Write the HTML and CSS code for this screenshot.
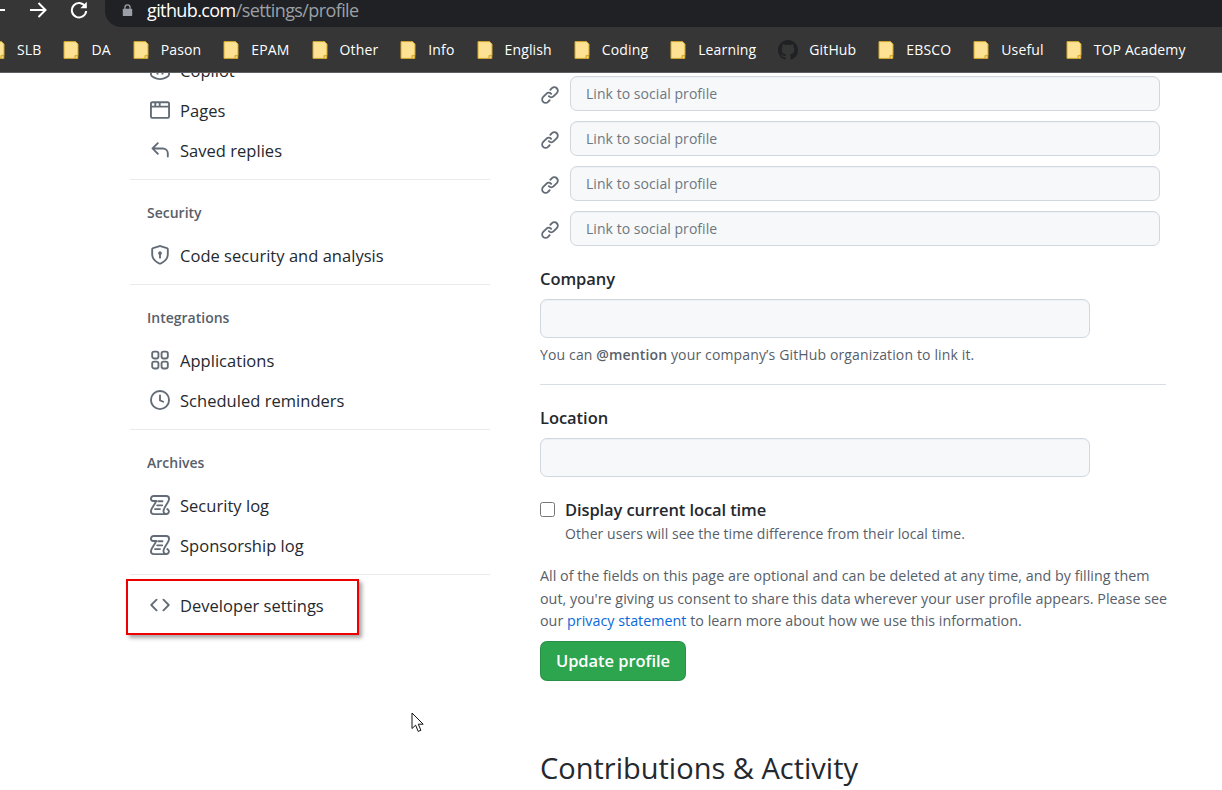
FILE: index.html
```html
<!DOCTYPE html>
<html lang="en">
<head>
<meta charset="utf-8">
<title>Your profile</title>
<link rel="stylesheet" href="styles.css">
</head>
<body>
<svg class="defs" width="0" height="0" aria-hidden="true">
  <symbol id="i-folder" viewBox="0 0 16 18"><path d="M1 .6h11.4L15 3v11.4h-.2v3H1z" fill="#fde293" stroke="#d3a72c" stroke-width="1"/><path d="M12 17.4v-3h3" fill="#f5c84c" stroke="#d3a72c"/></symbol>
  <symbol id="i-browser" viewBox="0 0 16 16"><path d="M0 2.75C0 1.784.784 1 1.75 1h12.5c.966 0 1.75.784 1.75 1.75v10.5A1.75 1.75 0 0 1 14.25 15H1.75A1.75 1.75 0 0 1 0 13.25ZM14.5 6h-13v7.25c0 .138.112.25.25.25h12.5a.25.25 0 0 0 .25-.25Zm-6-3.5v2h6v-1.75a.25.25 0 0 0-.25-.25ZM5 2.5v2h2v-2Zm-3.25 0a.25.25 0 0 0-.25.25V4.5h2v-2Z"/></symbol>
  <symbol id="i-reply" viewBox="0 0 16 16"><path d="M6.78 1.97a.75.75 0 0 1 0 1.06L3.81 6h6.44A4.75 4.75 0 0 1 15 10.75v2.5a.75.75 0 0 1-1.5 0v-2.5a3.25 3.25 0 0 0-3.25-3.25H3.81l2.97 2.97a.749.749 0 0 1-.326 1.275.749.749 0 0 1-.734-.215L1.47 7.28a.75.75 0 0 1 0-1.06l4.25-4.25a.75.75 0 0 1 1.06 0Z"/></symbol>
  <symbol id="i-shield" viewBox="0 0 16 16"><path d="M7.467.133a1.748 1.748 0 0 1 1.066 0l5.25 1.68A1.75 1.75 0 0 1 15 3.48V7c0 1.566-.32 3.182-1.303 4.682-.983 1.498-2.585 2.813-5.032 3.855a1.697 1.697 0 0 1-1.33 0c-2.447-1.042-4.049-2.357-5.032-3.855C1.32 10.182 1 8.566 1 7V3.48a1.75 1.75 0 0 1 1.217-1.667Zm.61 1.429a.25.25 0 0 0-.153 0l-5.25 1.68a.25.25 0 0 0-.174.238V7c0 1.358.275 2.666 1.057 3.86.784 1.194 2.121 2.34 4.366 3.297a.196.196 0 0 0 .154 0c2.245-.956 3.582-2.104 4.366-3.298C13.225 9.666 13.5 8.36 13.5 7V3.48a.251.251 0 0 0-.174-.237l-5.25-1.68ZM9.5 6.5c0 .536-.286 1.032-.75 1.3v2.45a.75.75 0 0 1-1.5 0V7.8A1.5 1.5 0 1 1 9.5 6.5Z"/></symbol>
  <symbol id="i-apps" viewBox="0 0 16 16"><g fill="none" stroke="currentColor" stroke-width="1.5"><rect x="1.75" y="1.25" width="5" height="5.5" rx="1.5"/><rect x="9.25" y="1.25" width="5" height="5.5" rx="1.5"/><rect x="1.75" y="9.25" width="5" height="5.5" rx="1.5"/><rect x="9.25" y="9.25" width="5" height="5.5" rx="1.5"/></g></symbol>
  <symbol id="i-clock" viewBox="0 0 16 16"><g fill="none" stroke="currentColor" stroke-width="1.5" stroke-linecap="round" stroke-linejoin="round"><circle cx="8" cy="8" r="7.25"/><path d="M8 4.25V8.3l2.6 1.1"/></g></symbol>
  <symbol id="i-log" viewBox="0 0 16 16"><g fill="none" stroke="currentColor" stroke-width="1.5" stroke-linecap="round" stroke-linejoin="round"><path d="M13 .75H3A2.25 2.25 0 0 0 .75 3c0 1.3.9 1.75 1.9 1.75h2"/><path d="M13 .75c1.2 0 2.25 1 2.25 2.25 0 2.9-4.5 6.9-4.5 10a2.25 2.25 0 0 0 4.1 1.25 2.2 2.2 0 0 0-1-3"/><path d="M13 15.25H3A2.25 2.25 0 0 1 .75 13c0-2.5 3.4-5.6 4.2-8.25"/><path d="M5.75 8.25h4M4 11.25h4"/><path d="M6.5 5h3.5"/></g></symbol>
  <symbol id="i-code" viewBox="0 0 16 16"><path d="m11.28 3.22 4.25 4.25a.75.75 0 0 1 0 1.06l-4.25 4.25a.749.749 0 0 1-1.275-.326.749.749 0 0 1 .215-.734L13.94 8l-3.72-3.72a.749.749 0 0 1 .326-1.275.749.749 0 0 1 .734.215Zm-6.56 0a.751.751 0 0 1 1.042.018.751.751 0 0 1 .018 1.042L2.06 8l3.72 3.72a.749.749 0 0 1-.326 1.275.749.749 0 0 1-.734-.215L.47 8.53a.75.75 0 0 1 0-1.06Z"/></symbol>
  <symbol id="i-link" viewBox="0 0 16 16"><path d="m7.775 3.275 1.25-1.25a3.5 3.5 0 1 1 4.95 4.95l-2.5 2.5a3.5 3.5 0 0 1-4.95 0 .751.751 0 0 1 .018-1.042.751.751 0 0 1 1.042-.018 1.998 1.998 0 0 0 2.83 0l2.5-2.5a2.002 2.002 0 0 0-2.83-2.83l-1.25 1.25a.751.751 0 0 1-1.042-.018.751.751 0 0 1-.018-1.042Zm-4.69 9.64a1.998 1.998 0 0 0 2.83 0l1.25-1.25a.751.751 0 0 1 1.042.018.751.751 0 0 1 .018 1.042l-1.25 1.25a3.5 3.5 0 1 1-4.95-4.95l2.5-2.5a3.5 3.5 0 0 1 4.95 0 .751.751 0 0 1-.018 1.042.751.751 0 0 1-1.042.018 1.998 1.998 0 0 0-2.83 0l-2.5 2.5a1.998 1.998 0 0 0 0 2.83Z"/></symbol>
  <symbol id="i-copilot" viewBox="0 0 16 16"><g fill="none" stroke="currentColor" stroke-width="1.5"><path d="M.75 9C.75 6 4 5 8 5s7.250 1 7.250 4v2.500c0 1.500-3.500 3.750-7.250 3.750S.75 13 .75 11.500Z"/><path d="M6 9v2.500M10 9v2.500"/></g></symbol>
  <symbol id="i-github" viewBox="0 0 16 16"><path d="M8 0c4.42 0 8 3.58 8 8a8.013 8.013 0 0 1-5.45 7.59c-.4.08-.55-.17-.55-.38 0-.27.01-1.13.01-2.2 0-.75-.25-1.23-.54-1.48 1.78-.2 3.65-.88 3.65-3.95 0-.88-.31-1.59-.82-2.15.08-.2.36-1.02-.08-2.12 0 0-.67-.22-2.2.82-.64-.18-1.32-.27-2-.27-.68 0-1.36.09-2 .27-1.53-1.03-2.2-.82-2.2-.82-.44 1.1-.16 1.92-.08 2.12-.51.56-.82 1.28-.82 2.15 0 3.06 1.86 3.75 3.64 3.95-.23.2-.44.55-.51 1.07-.46.21-1.61.55-2.33-.66-.15-.24-.6-.83-1.23-.82-.67.01-.27.38.01.53.34.19.73.9.82 1.13.16.45.68 1.31 2.69.94 0 .67.01 1.3.01 1.49 0 .21-.15.45-.55.38A7.995 7.995 0 0 1 0 8c0-4.42 3.58-8 8-8Z"/></symbol>
</svg>

<header class="chrome">
  <div class="toolbar">
    <svg class="nav-icon nav-back" viewBox="0 0 18 18"><path d="M17 9H2M9 2 2 9l7 7" fill="none" stroke="currentColor" stroke-width="2"/></svg>
    <svg class="nav-icon" viewBox="0 0 18 18"><path d="M1 9h15M9.500 2l7 7-7 7" fill="none" stroke="currentColor" stroke-width="2"/></svg>
    <svg class="nav-icon" viewBox="0 0 18 18"><path d="M15.200 5.500A7.200 7.200 0 1 0 16.200 10" fill="none" stroke="currentColor" stroke-width="2"/><path d="M16.800.8v6.400h-6.400z" fill="currentColor"/></svg>
    <div class="omnibox">
      <svg class="lock" viewBox="0 0 12 14"><path d="M3 6V4a3 3 0 0 1 6 0v2" fill="none" stroke="currentColor" stroke-width="1.500"/><rect y="5.500" width="11" height="8.500" rx="1" x=".5" fill="currentColor"/></svg>
      <span class="url"><span class="url-host">github.com</span>/settings/profile</span>
    </div>
  </div>
  <nav class="bookmarks">
    <a class="bm bm-first"><svg class="bm-icon"><use href="#i-folder"/></svg><span>SLB</span></a>
    <a class="bm"><svg class="bm-icon"><use href="#i-folder"/></svg><span>DA</span></a>
    <a class="bm"><svg class="bm-icon"><use href="#i-folder"/></svg><span>Pason</span></a>
    <a class="bm"><svg class="bm-icon"><use href="#i-folder"/></svg><span>EPAM</span></a>
    <a class="bm"><svg class="bm-icon"><use href="#i-folder"/></svg><span>Other</span></a>
    <a class="bm"><svg class="bm-icon"><use href="#i-folder"/></svg><span>Info</span></a>
    <a class="bm"><svg class="bm-icon"><use href="#i-folder"/></svg><span>English</span></a>
    <a class="bm"><svg class="bm-icon"><use href="#i-folder"/></svg><span>Coding</span></a>
    <a class="bm"><svg class="bm-icon"><use href="#i-folder"/></svg><span>Learning</span></a>
    <a class="bm bm-gh"><svg class="bm-gh-icon"><use href="#i-github"/></svg><span>GitHub</span></a>
    <a class="bm"><svg class="bm-icon"><use href="#i-folder"/></svg><span>EBSCO</span></a>
    <a class="bm"><svg class="bm-icon"><use href="#i-folder"/></svg><span>Useful</span></a>
    <a class="bm"><svg class="bm-icon"><use href="#i-folder"/></svg><span>TOP Academy</span></a>
  </nav>
</header>

<div class="page">
  <aside class="sidebar">
    <section class="side-group">
      <a class="side-item"><svg class="oct"><use href="#i-copilot"/></svg>Copilot</a>
      <a class="side-item"><svg class="oct"><use href="#i-browser"/></svg>Pages</a>
      <a class="side-item"><svg class="oct"><use href="#i-reply"/></svg>Saved replies</a>
    </section>
    <section class="side-group">
      <h3 class="side-head">Security</h3>
      <a class="side-item"><svg class="oct"><use href="#i-shield"/></svg>Code security and analysis</a>
    </section>
    <section class="side-group">
      <h3 class="side-head">Integrations</h3>
      <a class="side-item"><svg class="oct"><use href="#i-apps"/></svg>Applications</a>
      <a class="side-item"><svg class="oct"><use href="#i-clock"/></svg>Scheduled reminders</a>
    </section>
    <section class="side-group">
      <h3 class="side-head">Archives</h3>
      <a class="side-item"><svg class="oct"><use href="#i-log"/></svg>Security log</a>
      <a class="side-item"><svg class="oct"><use href="#i-log"/></svg>Sponsorship log</a>
    </section>
    <section class="side-last">
      <a class="side-item side-dev"><svg class="oct"><use href="#i-code"/></svg>Developer settings<span class="callout"></span></a>
    </section>
  </aside>

  <main class="content">
    <div class="social-row"><svg class="oct link-icon"><use href="#i-link"/></svg><input class="field social-field" placeholder="Link to social profile"></div>
    <div class="social-row"><svg class="oct link-icon"><use href="#i-link"/></svg><input class="field social-field" placeholder="Link to social profile"></div>
    <div class="social-row"><svg class="oct link-icon"><use href="#i-link"/></svg><input class="field social-field" placeholder="Link to social profile"></div>
    <div class="social-row"><svg class="oct link-icon"><use href="#i-link"/></svg><input class="field social-field" placeholder="Link to social profile"></div>

    <label class="form-label form-label-company">Company</label>
    <input class="field wide-field">
    <p class="note note-company">You can <b class="mention">@mention</b> your company’s GitHub organization to link it.</p>
    <hr class="rule">
    <label class="form-label form-label-location">Location</label>
    <input class="field wide-field">
    <div class="check-row">
      <input class="check" type="checkbox">
      <span class="check-label">Display current local time</span>
    </div>
    <p class="note check-note">Other users will see the time difference from their local time.</p>
    <p class="legal">All of the fields on this page are optional and can be deleted at any time, and by filling them out, you're giving us consent to share this data wherever your user profile appears. Please see our <a class="legal-link">privacy statement</a> to learn more about how we use this information.</p>
    <button class="primary">Update profile</button>
    <h2 class="section-title">Contributions &amp; Activity</h2>
  </main>
</div>

<svg class="cursor" viewBox="0 0 13 21"><path d="M1 1v15.500l3.600-3.300 2.600 6.200 2.700-1.100-2.600-6.100h4.900z" fill="#fff" stroke="#111" stroke-width="1"/></svg>
</body>
</html>
```

FILE: styles.css
```css
* { box-sizing: border-box; }
html, body { margin: 0; height: 790px; overflow: hidden; background: #fff; }
body { font-family: "Open Sans", "Noto Sans", "Liberation Sans", sans-serif; color: #24292f; position: relative; }
.defs { position: absolute; }

.chrome { height: 73px; border-bottom: 1px solid #5f6063; background: #363636; position: relative; z-index: 2; }
.toolbar { height: 27px; display: flex; align-items: flex-start; background: #363636; }
.nav-icon { width: 18px; height: 18px; color: #fff; margin-top: 1px; flex: none; margin-right: 23px; }
.nav-back { margin-left: -12px; }
.omnibox { margin-left: -6px; flex: 1; height: 27px; background: #202124; border-radius: 0 0 0 16px; padding-left: 17px; display: flex; align-items: flex-start; }
.lock { width: 11px; height: 12px; margin-top: 4px; color: #9aa0a6; flex: none; }
.url { margin-left: 14px; font-size: 18px; line-height: 20px; color: #9aa0a6; letter-spacing: -.6px; }
.url-host { color: #fff; }

.bookmarks { height: 45px; display: flex; align-items: center; gap: 22px; margin-left: -11px; color: #fff; font-size: 14px; letter-spacing: .14px; }
.bm { display: flex; align-items: center; gap: 12px; white-space: nowrap; }
.bm-icon { width: 16px; height: 18px; flex: none; }
.bm-gh-icon { width: 20px; height: 20px; flex: none; fill: #202124; }
.bm-gh { gap: 11px; }

.page { height: 717px; overflow: hidden; display: flex; gap: 50px; padding-left: 130px; }
.sidebar { width: 360px; flex: none; margin-top: -22px; }
.side-group { border-bottom: 1px solid #e8eaed; padding-bottom: 8px; }
.side-last { padding-top: 11px; }
.side-head { margin: 0; padding: 24px 0 14px 17px; font-size: 14px; line-height: 18px; font-weight: 600; color: #57606a; }
.side-item { position: relative; height: 40px; display: flex; align-items: center; gap: 10px; padding: 0 0 2px 20px; font-size: 16.5px; letter-spacing: .03px; white-space: nowrap; }
.oct { width: 20px; height: 20px; flex: none; fill: #636c76; color: #636c76; }
.callout { position: absolute; left: -4px; top: -7px; width: 233px; height: 56px; border: 2px solid #ee0000; box-shadow: 3px 3px 4px rgba(0,0,0,.35); pointer-events: none; }

.content { width: 626px; flex: none; padding-top: 3px; }
.social-row { display: flex; align-items: center; gap: 10px; height: 35px; margin-bottom: 10px; }
.social-row:nth-child(4) { margin-bottom: 0; }
.link-icon { margin-top: 2px; }
.field { display: block; font: inherit; background: #f6f8fa; border: 1px solid #d0d7de; border-radius: 7px; outline: none; box-shadow: inset 0 1px 0 rgba(208,215,222,.2); }
.social-field { width: 590px; height: 35px; padding: 0 15px; font-size: 14px; letter-spacing: .05px; }
.social-field::placeholder { color: #6e7781; opacity: 1; }
.wide-field { width: 550px; height: 39px; }
.form-label { display: block; margin: 0 0 10px; font-size: 16.5px; line-height: 20px; font-weight: 600; letter-spacing: -.05px; }
.form-label-company, .form-label-location { padding-top: 23px; }
.note { margin: 0; font-size: 14px; line-height: 20px; color: #57606a; letter-spacing: .06px; }
.note-company { margin-top: 7px; letter-spacing: .14px; }
.mention { font-weight: 600; }
.rule { margin: 19px 0 0; border: 0; border-top: 1px solid #d8dee4; }
.check-row { display: flex; align-items: center; gap: 10px; margin-top: 22px; height: 20px; }
.check { margin: 0; width: 15px; height: 15px; flex: none; }
.check-label { font-size: 16.5px; font-weight: 600; letter-spacing: -.1px; }
.check-note { margin: 5px 0 0 25px; }
.legal { margin: 21px -8px 0 0; font-size: 14.3px; line-height: 22.5px; color: #57606a; letter-spacing: .02px; }
.legal-link { color: #0969da; }
.primary { display: block; margin-top: 8px; width: 146px; height: 40px; border: 1px solid rgba(27,31,36,.15); border-radius: 7px; background: #2da44e; color: #fff; font: inherit; font-size: 16.5px; font-weight: 600; letter-spacing: -.05px; padding: 0; }
.section-title { margin: 67px 0 0; font-size: 29px; line-height: 40px; font-weight: 400; }

.cursor { position: absolute; left: 411px; top: 712px; width: 13px; height: 21px; z-index: 3; }
```
